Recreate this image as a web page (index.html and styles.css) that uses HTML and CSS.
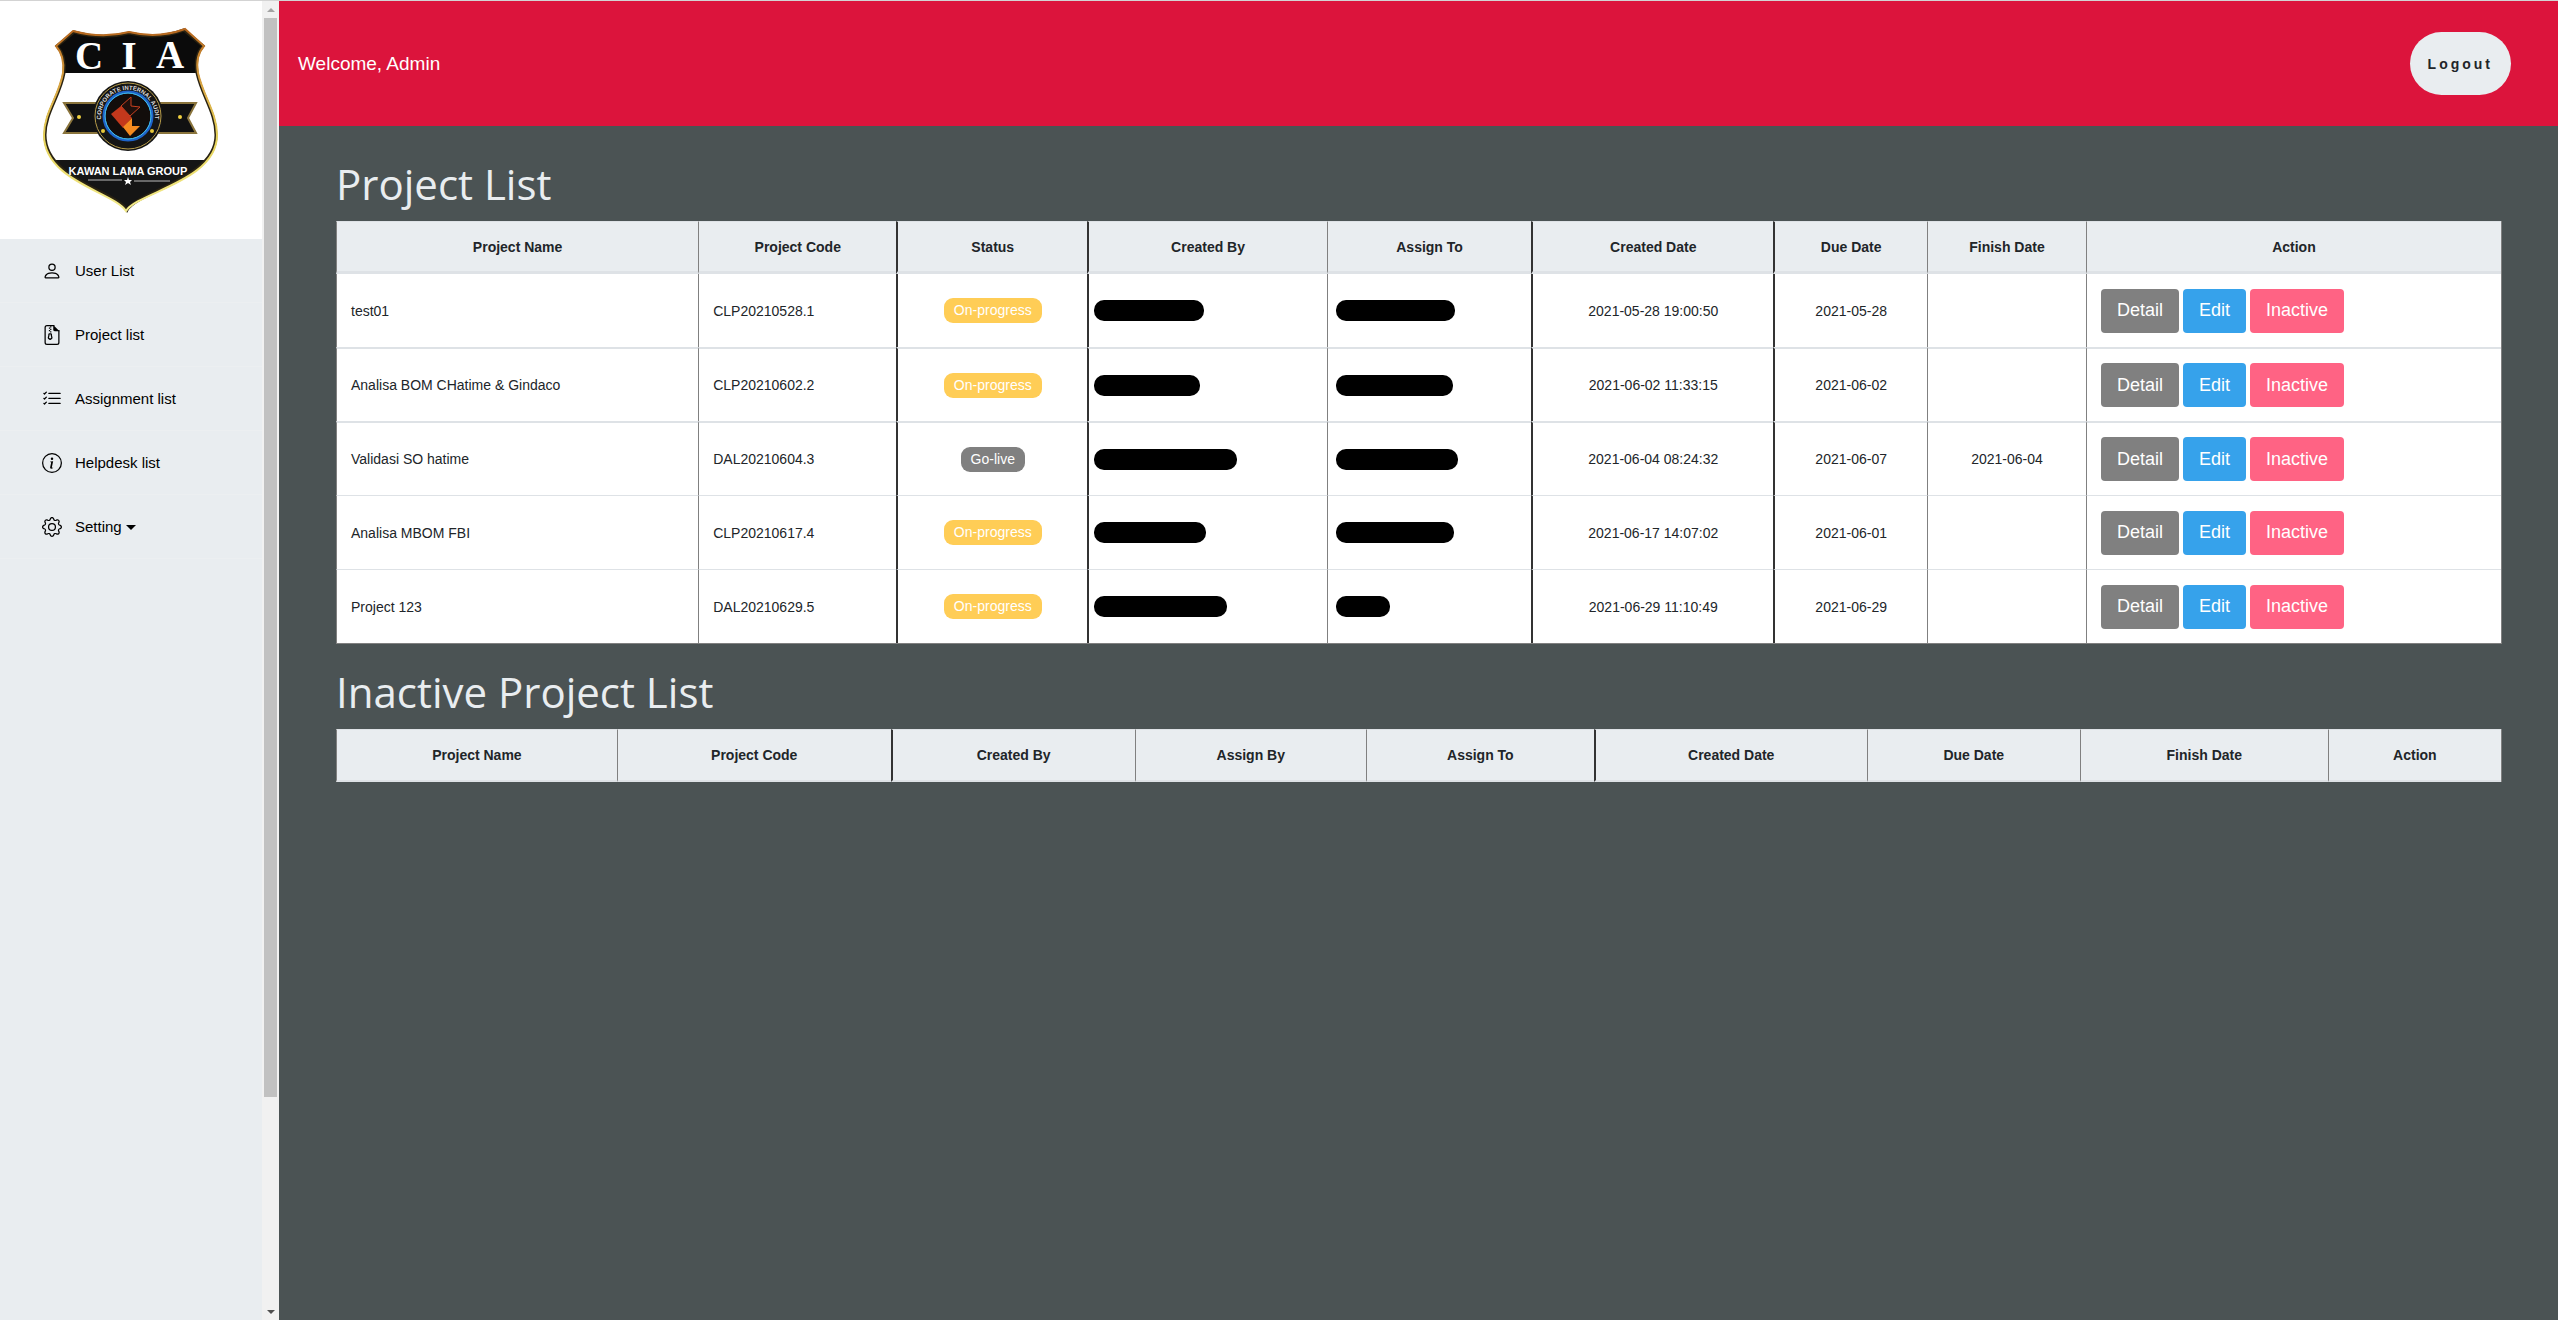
FILE: index.html
```html
<!DOCTYPE html>
<html lang="en">
<head>
<meta charset="utf-8">
<title>Project List</title>
<link rel="stylesheet" href="styles.css">
</head>
<body>
<div class="app">
  <aside class="sidebar">
    <div class="sidebar-content">
      <div class="brand">
        <svg class="brand-logo" viewBox="0 0 262 238" role="img" aria-label="CIA Kawan Lama Group">
          <defs>
            <linearGradient id="rim" x1="0" y1="0" x2="0" y2="1">
              <stop offset="0" stop-color="#b5651d"/>
              <stop offset=".3" stop-color="#d9a441"/>
              <stop offset=".6" stop-color="#e6d35a"/>
              <stop offset="1" stop-color="#f3eb8c"/>
            </linearGradient>
            <clipPath id="shield">
              <path d="M74 31Q102 39 129 32Q158 39 184 29L203 45Q194 55 197 72C202 95 216 112 216 134C216 178 138 190 127 209C115 190 45 178 45 134C45 112 60 95 64 72Q66 55 57 45Z"/>
            </clipPath>
            <path id="ring-top" d="M103 126A27 27 0 1 1 153 126"/>
          </defs>
          <g clip-path="url(#shield)">
            <rect x="40" y="25" width="180" height="190" fill="#fff"/>
            <rect x="40" y="25" width="180" height="47" fill="#0b0b0b"/>
            <rect x="40" y="159" width="180" height="55" fill="#151515"/>
          </g>
          <path d="M74 31Q102 39 129 32Q158 39 184 29L203 45Q194 55 197 72C202 95 216 112 216 134C216 178 138 190 127 209C115 190 45 178 45 134C45 112 60 95 64 72Q66 55 57 45Z" fill="none" stroke="#2a2312" stroke-width="3"/>
          <path d="M73 30Q102 38 129 31Q158 38 185 28L204 45Q195 55 198 72C203 95 217 112 217 134C217 180 138 191 126 210C114 191 44 180 44 134C44 112 59 95 63 72Q65 55 56 45Z" fill="none" stroke="url(#rim)" stroke-width="2"/>
          <g class="logo-initials">
            <text x="89" y="68">C</text>
            <text x="129" y="68">I</text>
            <text x="170" y="67">A</text>
          </g>
          <path d="M64 102H196L188 117L196 132H64L73 117Z" fill="#111" stroke="#8a743c" stroke-width="2"/>
          <circle cx="79" cy="116" r="2" fill="#f0d040"/>
          <circle cx="180" cy="116" r="2" fill="#f0d040"/>
          <circle cx="128" cy="115" r="35" fill="#151515"/>
          <circle cx="128" cy="115" r="33" fill="none" stroke="#b59a48"/>
          <circle cx="128" cy="115" r="24" fill="#120d0b" stroke="#1d62c9" stroke-width="3"/>
          <circle cx="128" cy="115" r="23" fill="none" stroke="#45c5e8"/>
          <text class="logo-ring"><textPath href="#ring-top" startOffset="50%">CORPORATE INTERNAL AUDIT</textPath></text>
          <circle cx="103" cy="130" r="2" fill="#e8c83a"/>
          <circle cx="152" cy="130" r="2" fill="#e8c83a"/>
          <path d="M111 113L121 105L132 117L123 127Z" fill="#c3381c"/>
          <path d="M123 126L132 117V125H140L130 135Z" fill="#f58a1f"/>
          <path d="M121 105L131 96V105L140 106L130 115Z" fill="#20100c" stroke="#c9401f"/>
          <text class="logo-name" x="128" y="174">KAWAN LAMA GROUP</text>
          <path d="M88 179H122M134 180H170" stroke="#bbb"/>
          <path d="M128 176L129 179H132L130 181L131 184L128 182L125 184L126 181L124 179H127Z" fill="#fff"/>
        </svg>
      </div>
      <nav class="menu">
        <a class="menu-item" href="#users">
          <svg class="menu-icon" viewBox="0 0 16 16"><path d="M8 8a3 3 0 1 0 0-6 3 3 0 0 0 0 6zm2-3a2 2 0 1 1-4 0 2 2 0 0 1 4 0zm4 8c0 1-1 1-1 1H3s-1 0-1-1 1-4 6-4 6 3 6 4zm-1-.004c-.001-.246-.154-.986-.832-1.664C11.516 10.680 10.289 10 8 10c-2.290 0-3.516.680-4.168 1.332-.678.678-.830 1.418-.832 1.664h10z"/></svg>
          User List
        </a>
        <a class="menu-item" href="#projects">
          <svg class="menu-icon" viewBox="0 0 16 16"><path d="M9 0v3.500A1.500 1.500 0 0 0 10.500 5H14z"/><path d="M4 0h6v1H4a1 1 0 0 0-1 1v12a1 1 0 0 0 1 1h8a1 1 0 0 0 1-1V4h1v10a2 2 0 0 1-2 2H4a2 2 0 0 1-2-2V2a2 2 0 0 1 2-2z"/><path d="M5 7.500a1 1 0 0 1 1-1h1a1 1 0 0 1 1 1v.938l.4 1.599a1 1 0 0 1-.416 1.074l-.93.62a1 1 0 0 1-1.110 0l-.929-.62a1 1 0 0 1-.415-1.074L5 8.438V7.500zm2 0H6v.938a1 1 0 0 1-.03.243l-.4 1.598.93.62.929-.62-.4-1.598A1 1 0 0 1 7 8.438V7.500z"/><path d="M6.500 1h1v1h-1zM5.500 2h1v1h-1zM6.500 3h1v1h-1zM5.500 4h1v1h-1zM6.500 5h1v1h-1z"/></svg>
          Project list
        </a>
        <a class="menu-item" href="#assignments">
          <svg class="menu-icon" viewBox="0 0 16 16"><path d="M5 11.500a.5.5 0 0 1 .5-.5h9a.5.5 0 0 1 0 1h-9a.5.5 0 0 1-.5-.5zm0-4a.5.5 0 0 1 .5-.5h9a.5.5 0 0 1 0 1h-9a.5.5 0 0 1-.5-.5zm0-4a.5.5 0 0 1 .5-.5h9a.5.5 0 0 1 0 1h-9a.5.5 0 0 1-.5-.5zM3.854 2.146a.5.5 0 0 1 0 .708l-1.500 1.500a.5.5 0 0 1-.708 0l-.5-.5a.5.5 0 1 1 .708-.708L2 3.293l1.146-1.147a.5.5 0 0 1 .708 0zm0 4a.5.5 0 0 1 0 .708l-1.500 1.500a.5.5 0 0 1-.708 0l-.5-.5a.5.5 0 1 1 .708-.708L2 7.293l1.146-1.147a.5.5 0 0 1 .708 0zm0 4a.5.5 0 0 1 0 .708l-1.500 1.500a.5.5 0 0 1-.708 0l-.5-.5a.5.5 0 0 1 .708-.708l.146.147 1.146-1.147a.5.5 0 0 1 .708 0z"/></svg>
          Assignment list
        </a>
        <a class="menu-item" href="#helpdesk">
          <svg class="menu-icon" viewBox="0 0 16 16"><path d="M8 15A7 7 0 1 1 8 1a7 7 0 0 1 0 14zm0 1A8 8 0 1 0 8 0a8 8 0 0 0 0 16z"/><path d="m8.930 6.588-2.290.287-.082.380.450.083c.294.070.352.176.288.469l-.738 3.468c-.194.897.105 1.319.808 1.319.545 0 1.178-.252 1.465-.598l.088-.416c-.2.176-.492.246-.686.246-.275 0-.375-.193-.304-.533L8.930 6.588zM9 4.500a1 1 0 1 1-2 0 1 1 0 0 1 2 0z"/></svg>
          Helpdesk list
        </a>
        <a class="menu-item" href="#setting">
          <svg class="menu-icon" viewBox="0 0 16 16"><path d="M8 4.754a3.246 3.246 0 1 0 0 6.492 3.246 3.246 0 0 0 0-6.492zM5.754 8a2.246 2.246 0 1 1 4.492 0 2.246 2.246 0 0 1-4.492 0z"/><path d="M9.796 1.343c-.527-1.790-3.065-1.790-3.592 0l-.094.319a.873.873 0 0 1-1.255.520l-.292-.160c-1.640-.892-3.433.902-2.540 2.541l.159.292a.873.873 0 0 1-.520 1.255l-.319.094c-1.790.527-1.790 3.065 0 3.592l.319.094a.873.873 0 0 1 .520 1.255l-.160.292c-.892 1.640.901 3.434 2.541 2.540l.292-.159a.873.873 0 0 1 1.255.520l.094.319c.527 1.790 3.065 1.790 3.592 0l.094-.319a.873.873 0 0 1 1.255-.520l.292.160c1.640.893 3.434-.902 2.540-2.541l-.159-.292a.873.873 0 0 1 .520-1.255l.319-.094c1.790-.527 1.790-3.065 0-3.592l-.319-.094a.873.873 0 0 1-.520-1.255l.160-.292c.893-1.640-.902-3.433-2.541-2.540l-.292.159a.873.873 0 0 1-1.255-.520l-.094-.319zm-2.633.283c.246-.835 1.428-.835 1.674 0l.094.319a1.873 1.873 0 0 0 2.693 1.115l.291-.160c.764-.415 1.600.420 1.184 1.185l-.159.292a1.873 1.873 0 0 0 1.116 2.692l.318.094c.835.246.835 1.428 0 1.674l-.319.094a1.873 1.873 0 0 0-1.115 2.693l.160.291c.415.764-.420 1.600-1.185 1.184l-.291-.159a1.873 1.873 0 0 0-2.693 1.116l-.094.318c-.246.835-1.428.835-1.674 0l-.094-.319a1.873 1.873 0 0 0-2.692-1.115l-.292.160c-.764.415-1.600-.420-1.184-1.185l.159-.291A1.873 1.873 0 0 0 1.945 8.930l-.319-.094c-.835-.246-.835-1.428 0-1.674l.319-.094A1.873 1.873 0 0 0 3.060 4.377l-.160-.292c-.415-.764.420-1.600 1.185-1.184l.292.159a1.873 1.873 0 0 0 2.692-1.115l.094-.319z"/></svg>
          <span class="menu-label">Setting <span class="caret"></span></span>
        </a>
      </nav>
    </div>
    <div class="scrollbar" aria-hidden="true">
      <span class="scroll-arrow scroll-up"></span>
      <span class="scroll-track"><span class="scroll-thumb"></span></span>
      <span class="scroll-arrow scroll-down"></span>
    </div>
  </aside>

  <div class="page">
    <header class="topbar">
      <span class="welcome">Welcome, Admin</span>
      <button class="logout" type="button">Logout</button>
    </header>
    <main class="content">
      <h1 class="section-title">Project List</h1>
      <table class="grid projects">
        <colgroup><col class="p-name"><col class="p-code"><col class="p-status"><col class="p-creator"><col class="p-assignee"><col class="p-created"><col class="p-due"><col class="p-finish"><col class="p-action"></colgroup>
        <thead>
          <tr><th>Project Name</th><th>Project Code</th><th class="strong">Status</th><th class="strong">Created By</th><th>Assign To</th><th class="strong">Created Date</th><th class="strong">Due Date</th><th>Finish Date</th><th>Action</th></tr>
        </thead>
        <tbody>
          <tr>
            <td>test01</td><td>CLP20210528.1</td><td class="mid strong"><span class="badge progress">On-progress</span></td>
            <td class="creator strong"><span class="masked" style="width:110px"></span></td><td class="assignee"><span class="masked" style="width:119px"></span></td>
            <td class="mid strong">2021-05-28 19:00:50</td><td class="mid strong">2021-05-28</td><td class="mid"></td>
            <td><div class="actions"><button type="button" class="btn detail">Detail</button><button type="button" class="btn edit">Edit</button><button type="button" class="btn inactive">Inactive</button></div></td>
          </tr>
          <tr>
            <td>Analisa BOM CHatime &amp; Gindaco</td><td>CLP20210602.2</td><td class="mid strong"><span class="badge progress">On-progress</span></td>
            <td class="creator strong"><span class="masked" style="width:106px"></span></td><td class="assignee"><span class="masked" style="width:117px"></span></td>
            <td class="mid strong">2021-06-02 11:33:15</td><td class="mid strong">2021-06-02</td><td class="mid"></td>
            <td><div class="actions"><button type="button" class="btn detail">Detail</button><button type="button" class="btn edit">Edit</button><button type="button" class="btn inactive">Inactive</button></div></td>
          </tr>
          <tr>
            <td>Validasi SO hatime</td><td>DAL20210604.3</td><td class="mid strong"><span class="badge live">Go-live</span></td>
            <td class="creator strong"><span class="masked" style="width:143px"></span></td><td class="assignee"><span class="masked" style="width:122px"></span></td>
            <td class="mid strong">2021-06-04 08:24:32</td><td class="mid strong">2021-06-07</td><td class="mid">2021-06-04</td>
            <td><div class="actions"><button type="button" class="btn detail">Detail</button><button type="button" class="btn edit">Edit</button><button type="button" class="btn inactive">Inactive</button></div></td>
          </tr>
          <tr>
            <td>Analisa MBOM FBI</td><td>CLP20210617.4</td><td class="mid strong"><span class="badge progress">On-progress</span></td>
            <td class="creator strong"><span class="masked" style="width:112px"></span></td><td class="assignee"><span class="masked" style="width:118px"></span></td>
            <td class="mid strong">2021-06-17 14:07:02</td><td class="mid strong">2021-06-01</td><td class="mid"></td>
            <td><div class="actions"><button type="button" class="btn detail">Detail</button><button type="button" class="btn edit">Edit</button><button type="button" class="btn inactive">Inactive</button></div></td>
          </tr>
          <tr>
            <td>Project 123</td><td>DAL20210629.5</td><td class="mid strong"><span class="badge progress">On-progress</span></td>
            <td class="creator strong"><span class="masked" style="width:133px"></span></td><td class="assignee"><span class="masked" style="width:54px"></span></td>
            <td class="mid strong">2021-06-29 11:10:49</td><td class="mid strong">2021-06-29</td><td class="mid"></td>
            <td><div class="actions"><button type="button" class="btn detail">Detail</button><button type="button" class="btn edit">Edit</button><button type="button" class="btn inactive">Inactive</button></div></td>
          </tr>
        </tbody>
      </table>

      <h2 class="section-title">Inactive Project List</h2>
      <table class="grid">
        <colgroup><col class="i-name"><col class="i-code"><col class="i-creator"><col class="i-assigner"><col class="i-assignee"><col class="i-created"><col class="i-due"><col class="i-finish"><col class="i-action"></colgroup>
        <thead>
          <tr><th>Project Name</th><th>Project Code</th><th class="strong">Created By</th><th>Assign By</th><th>Assign To</th><th class="strong">Created Date</th><th>Due Date</th><th>Finish Date</th><th>Action</th></tr>
        </thead>
      </table>
    </main>
  </div>
</div>
</body>
</html>
```
FILE: styles.css
```css
* { box-sizing: border-box; }

body {
  margin: 0;
  background: #4b5354;
  color: #212529;
  font-family: "Liberation Sans", Arial, sans-serif;
  font-size: 14px;
}

.app {
  display: flex;
  min-height: 100vh;
  border-top: 1px solid #d3d3d3;
}

/* Sidebar */
.sidebar {
  display: flex;
  flex: none;
  width: 279px;
  background: #e9edf0;
}

.sidebar-content { flex: 1; }

.brand { background: #fff; }

.brand-logo { display: block; width: 100%; }

.logo-initials {
  fill: #fff;
  font: bold 39px "Liberation Serif", serif;
  text-anchor: middle;
}

.logo-ring {
  fill: #ddd;
  font: bold 6px "Liberation Sans", sans-serif;
  text-anchor: middle;
}

.logo-name {
  fill: #fff;
  font: bold 11px "Liberation Sans", sans-serif;
  text-anchor: middle;
}

.menu-item {
  display: flex;
  align-items: center;
  gap: 13px;
  height: 64px;
  padding-left: 42px;
  border-bottom: 1px solid #eceff1;
  color: #000;
  font-size: 15px;
  text-decoration: none;
}

.menu-icon { width: 20px; height: 20px; fill: currentColor; }

.caret {
  display: inline-block;
  border: 5px solid transparent;
  border-top-color: #000;
  border-bottom: 0;
  vertical-align: 2px;
}

.scrollbar {
  display: flex;
  flex-direction: column;
  align-items: center;
  width: 17px;
  background: #f1f1f1;
}

.scroll-arrow {
  width: 17px;
  height: 17px;
  display: grid;
  place-items: center;
}

.scroll-arrow::before {
  content: "";
  border: 4px solid transparent;
}

.scroll-up::before { border-top: 0; border-bottom-color: #a3a3a3; }
.scroll-down::before { border-bottom: 0; border-top-color: #505050; }

.scroll-track { display: block; flex: 1; width: 13px; }
.scroll-thumb { display: block; height: 84%; background: #c1c1c1; }

/* Header */
.page { flex: 1; min-width: 0; }

.topbar {
  display: flex;
  align-items: center;
  justify-content: space-between;
  height: 125px;
  padding: 0 47px 0 19px;
  background: #dc143c;
}

.welcome { color: #fff; font-size: 19px; }

.logout {
  height: 63px;
  padding: 0 18px;
  border: 0;
  border-radius: 32px;
  background: #e9edf0;
  color: #212529;
  font: bold 14px "Liberation Sans", Arial, sans-serif;
  letter-spacing: 3px;
}

/* Content */
.content { padding: 10px 56px 56px 57px; }

.section-title {
  margin: 0;
  padding: 20px 0 9px;
  color: #e9edf0;
  font: 400 42px/56px "Open Sans", "Noto Sans", sans-serif;
}

.grid {
  width: 100%;
  table-layout: fixed;
  border-collapse: separate;
  border-spacing: 0;
  background: #fff;
  border-right: 1px solid #808080;
}

.grid th {
  height: 53px;
  padding: 0 14px;
  border-top: 1px solid #dee2e6;
  border-bottom: 2px solid #dee2e6;
  border-left: 1px solid #808080;
  background: #e9edf0;
}

.projects th { border-bottom-width: 3px; }

.grid td {
  height: 74px;
  padding: 0 14px;
  border-top: 1px solid #dee2e6;
  border-left: 1px solid #808080;
}

.grid tr:first-child td { height: 73px; border-top: 0; }
.grid tr:nth-child(2) td,
.grid tr:nth-child(3) td { border-top-width: 2px; }

.grid .strong { border-left: 2px solid #333; }
.projects { border-bottom: 1px solid #808080; }
.grid .mid { text-align: center; }
.grid .creator { padding: 0 5px; }
.grid .assignee { padding: 0 8px; }

.p-name { width: 16.73%; }
.p-code { width: 9.15%; }
.p-status { width: 8.82%; }
.p-creator { width: 11.07%; }
.p-assignee { width: 9.44%; }
.p-created { width: 11.18%; }
.p-due { width: 7.1%; }
.p-finish { width: 7.34%; }
.p-action { width: 19.17%; }

.i-name { width: 12.97%; }
.i-code { width: 12.65%; }
.i-creator { width: 11.27%; }
.i-assigner { width: 10.68%; }
.i-assignee { width: 10.53%; }
.i-created { width: 12.6%; }
.i-due { width: 9.85%; }
.i-finish { width: 11.45%; }
.i-action { width: 8%; }

.badge {
  display: inline-block;
  padding: 0 10px;
  border-radius: 9px;
  color: #fff;
  line-height: 25px;
}

.progress { background: #ffcd56; }
.live { background: #808080; }

.masked {
  display: block;
  height: 21px;
  border-radius: 10px;
  background: #000;
}

.actions { display: flex; gap: 4px; }

.btn {
  height: 44px;
  padding: 0 16px;
  border: 0;
  border-radius: 4px;
  color: #fff;
  font: 18px "Liberation Sans", Arial, sans-serif;
}

.detail { background: #808080; }
.edit { background: #36a2eb; }
.inactive { background: #ff6384; }
```
